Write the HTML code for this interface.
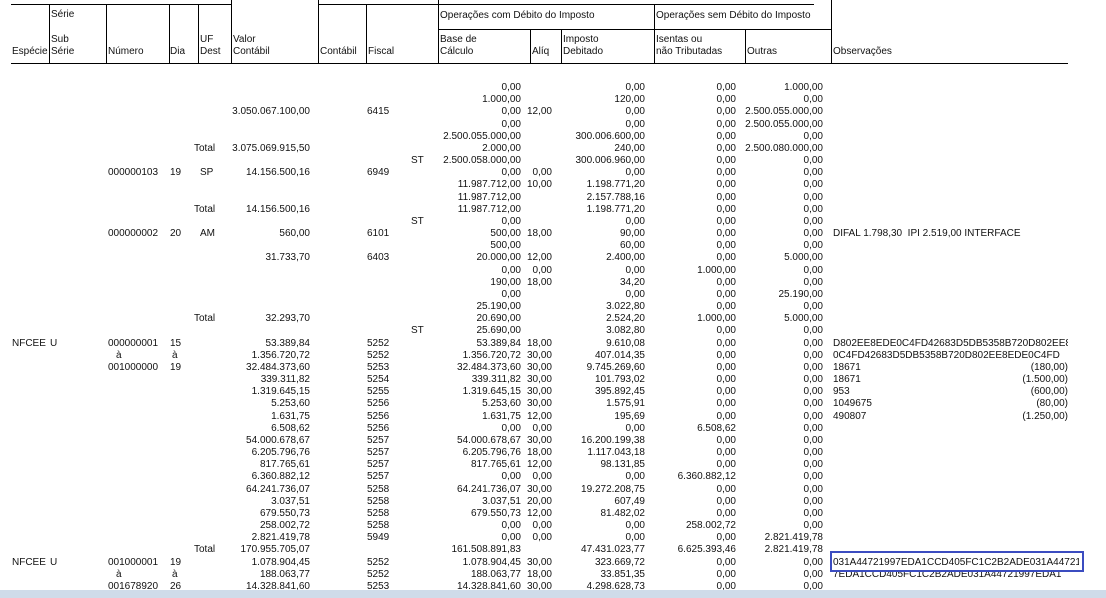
<!DOCTYPE html>
<html><head><meta charset="utf-8"><style>
html,body{margin:0;padding:0;background:#fff}
body{width:1106px;height:598px;position:relative;overflow:hidden;font-family:"Liberation Sans",Arial,sans-serif;font-size:10px;color:#111}
.l{position:absolute;background:#000}
.h{position:absolute;line-height:12px;white-space:nowrap}
.r{position:absolute;left:0;width:1106px;height:12px;line-height:12px}
.r span{position:absolute;white-space:nowrap}
.e{left:12px}.s{left:50px}.n{left:108px}.na{left:116px}.d{left:170px}.da{left:172px}.u{left:200px}.t{left:194px}
.v{right:796px}.c{left:367px}.x{left:411px}.b{right:585px}.q{right:554px}.m{right:461px}.i{right:370px}.o{right:283px}
.p{left:833px;width:235px;overflow:hidden}.z{right:38px}
.band{position:absolute;left:0;top:590px;width:1106px;height:8px;background:#cfdbe9}
.box{position:absolute;left:830px;top:551px;width:250px;height:17px;border:2px solid #3b4cc0}
</style></head><body>
<div class="l" style="left:11px;top:4px;width:220px;height:1px"></div>
<div class="l" style="left:318px;top:4px;width:496px;height:1px"></div>
<div class="l" style="left:49px;top:4px;width:1px;height:59px"></div>
<div class="l" style="left:106px;top:4px;width:1px;height:59px"></div>
<div class="l" style="left:169px;top:4px;width:1px;height:59px"></div>
<div class="l" style="left:198px;top:4px;width:1px;height:59px"></div>
<div class="l" style="left:231px;top:0;width:1px;height:63px"></div>
<div class="l" style="left:318px;top:0;width:1px;height:63px"></div>
<div class="l" style="left:366px;top:4px;width:1px;height:59px"></div>
<div class="l" style="left:438px;top:0;width:1px;height:63px"></div>
<div class="l" style="left:438px;top:29px;width:393px;height:1px"></div>
<div class="l" style="left:530px;top:29px;width:1px;height:34px"></div>
<div class="l" style="left:561px;top:29px;width:1px;height:34px"></div>
<div class="l" style="left:654px;top:4px;width:1px;height:59px"></div>
<div class="l" style="left:745px;top:29px;width:1px;height:34px"></div>
<div class="l" style="left:831px;top:0;width:1px;height:63px"></div>
<div class="l" style="left:11px;top:63px;width:1057px;height:1px"></div>
<div class="h" style="left:51px;top:9px">Série</div>
<div class="h" style="left:51px;top:34px">Sub<br>Série</div>
<div class="h" style="left:12px;top:46px">Espécie</div>
<div class="h" style="left:108px;top:46px">Número</div>
<div class="h" style="left:170px;top:46px">Dia</div>
<div class="h" style="left:200px;top:34px">UF<br>Dest</div>
<div class="h" style="left:233px;top:34px">Valor<br>Contábil</div>
<div class="h" style="left:320px;top:46px">Contábil</div>
<div class="h" style="left:368px;top:46px">Fiscal</div>
<div class="h" style="left:440px;top:10px">Operações com Débito do Imposto</div>
<div class="h" style="left:656px;top:10px">Operações sem Débito do Imposto</div>
<div class="h" style="left:440px;top:34px">Base de<br>Cálculo</div>
<div class="h" style="left:532px;top:46px">Alíq</div>
<div class="h" style="left:563px;top:34px">Imposto<br>Debitado</div>
<div class="h" style="left:656px;top:34px">Isentas ou<br>não Tributadas</div>
<div class="h" style="left:747px;top:46px">Outras</div>
<div class="h" style="left:833px;top:46px">Observações</div>

<div class="r" style="top:82px"><span class="b">0,00</span><span class="m">0,00</span><span class="i">0,00</span><span class="o">1.000,00</span></div>
<div class="r" style="top:94px"><span class="b">1.000,00</span><span class="m">120,00</span><span class="i">0,00</span><span class="o">0,00</span></div>
<div class="r" style="top:106px"><span class="v">3.050.067.100,00</span><span class="c">6415</span><span class="b">0,00</span><span class="q">12,00</span><span class="m">0,00</span><span class="i">0,00</span><span class="o">2.500.055.000,00</span></div>
<div class="r" style="top:119px"><span class="b">0,00</span><span class="m">0,00</span><span class="i">0,00</span><span class="o">2.500.055.000,00</span></div>
<div class="r" style="top:131px"><span class="b">2.500.055.000,00</span><span class="m">300.006.600,00</span><span class="i">0,00</span><span class="o">0,00</span></div>
<div class="r" style="top:143px"><span class="t">Total</span><span class="v">3.075.069.915,50</span><span class="b">2.000,00</span><span class="m">240,00</span><span class="i">0,00</span><span class="o">2.500.080.000,00</span></div>
<div class="r" style="top:155px"><span class="x">ST</span><span class="b">2.500.058.000,00</span><span class="m">300.006.960,00</span><span class="i">0,00</span><span class="o">0,00</span></div>
<div class="r" style="top:167px"><span class="n">000000103</span><span class="d">19</span><span class="u">SP</span><span class="v">14.156.500,16</span><span class="c">6949</span><span class="b">0,00</span><span class="q">0,00</span><span class="m">0,00</span><span class="i">0,00</span><span class="o">0,00</span></div>
<div class="r" style="top:179px"><span class="b">11.987.712,00</span><span class="q">10,00</span><span class="m">1.198.771,20</span><span class="i">0,00</span><span class="o">0,00</span></div>
<div class="r" style="top:192px"><span class="b">11.987.712,00</span><span class="m">2.157.788,16</span><span class="i">0,00</span><span class="o">0,00</span></div>
<div class="r" style="top:204px"><span class="t">Total</span><span class="v">14.156.500,16</span><span class="b">11.987.712,00</span><span class="m">1.198.771,20</span><span class="i">0,00</span><span class="o">0,00</span></div>
<div class="r" style="top:216px"><span class="x">ST</span><span class="b">0,00</span><span class="m">0,00</span><span class="i">0,00</span><span class="o">0,00</span></div>
<div class="r" style="top:228px"><span class="n">000000002</span><span class="d">20</span><span class="u">AM</span><span class="v">560,00</span><span class="c">6101</span><span class="b">500,00</span><span class="q">18,00</span><span class="m">90,00</span><span class="i">0,00</span><span class="o">0,00</span><span class="p">DIFAL 1.798,30 &nbsp;IPI 2.519,00 INTERFACE</span></div>
<div class="r" style="top:240px"><span class="b">500,00</span><span class="m">60,00</span><span class="i">0,00</span><span class="o">0,00</span></div>
<div class="r" style="top:252px"><span class="v">31.733,70</span><span class="c">6403</span><span class="b">20.000,00</span><span class="q">12,00</span><span class="m">2.400,00</span><span class="i">0,00</span><span class="o">5.000,00</span></div>
<div class="r" style="top:265px"><span class="b">0,00</span><span class="q">0,00</span><span class="m">0,00</span><span class="i">1.000,00</span><span class="o">0,00</span></div>
<div class="r" style="top:277px"><span class="b">190,00</span><span class="q">18,00</span><span class="m">34,20</span><span class="i">0,00</span><span class="o">0,00</span></div>
<div class="r" style="top:289px"><span class="b">0,00</span><span class="m">0,00</span><span class="i">0,00</span><span class="o">25.190,00</span></div>
<div class="r" style="top:301px"><span class="b">25.190,00</span><span class="m">3.022,80</span><span class="i">0,00</span><span class="o">0,00</span></div>
<div class="r" style="top:313px"><span class="t">Total</span><span class="v">32.293,70</span><span class="b">20.690,00</span><span class="m">2.524,20</span><span class="i">1.000,00</span><span class="o">5.000,00</span></div>
<div class="r" style="top:325px"><span class="x">ST</span><span class="b">25.690,00</span><span class="m">3.082,80</span><span class="i">0,00</span><span class="o">0,00</span></div>
<div class="r" style="top:338px"><span class="e">NFCEE</span><span class="s">U</span><span class="n">000000001</span><span class="d">15</span><span class="v">53.389,84</span><span class="c">5252</span><span class="b">53.389,84</span><span class="q">18,00</span><span class="m">9.610,08</span><span class="i">0,00</span><span class="o">0,00</span><span class="p">D802EE8EDE0C4FD42683D5DB5358B720D802EE8EDE0C4FD</span></div>
<div class="r" style="top:350px"><span class="na">à</span><span class="da">à</span><span class="v">1.356.720,72</span><span class="c">5252</span><span class="b">1.356.720,72</span><span class="q">30,00</span><span class="m">407.014,35</span><span class="i">0,00</span><span class="o">0,00</span><span class="p">0C4FD42683D5DB5358B720D802EE8EDE0C4FD</span></div>
<div class="r" style="top:362px"><span class="n">001000000</span><span class="d">19</span><span class="v">32.484.373,60</span><span class="c">5253</span><span class="b">32.484.373,60</span><span class="q">30,00</span><span class="m">9.745.269,60</span><span class="i">0,00</span><span class="o">0,00</span><span class="p">18671</span><span class="z">(180,00)</span></div>
<div class="r" style="top:374px"><span class="v">339.311,82</span><span class="c">5254</span><span class="b">339.311,82</span><span class="q">30,00</span><span class="m">101.793,02</span><span class="i">0,00</span><span class="o">0,00</span><span class="p">18671</span><span class="z">(1.500,00)</span></div>
<div class="r" style="top:386px"><span class="v">1.319.645,15</span><span class="c">5255</span><span class="b">1.319.645,15</span><span class="q">30,00</span><span class="m">395.892,45</span><span class="i">0,00</span><span class="o">0,00</span><span class="p">953</span><span class="z">(600,00)</span></div>
<div class="r" style="top:398px"><span class="v">5.253,60</span><span class="c">5256</span><span class="b">5.253,60</span><span class="q">30,00</span><span class="m">1.575,91</span><span class="i">0,00</span><span class="o">0,00</span><span class="p">1049675</span><span class="z">(80,00)</span></div>
<div class="r" style="top:411px"><span class="v">1.631,75</span><span class="c">5256</span><span class="b">1.631,75</span><span class="q">12,00</span><span class="m">195,69</span><span class="i">0,00</span><span class="o">0,00</span><span class="p">490807</span><span class="z">(1.250,00)</span></div>
<div class="r" style="top:423px"><span class="v">6.508,62</span><span class="c">5256</span><span class="b">0,00</span><span class="q">0,00</span><span class="m">0,00</span><span class="i">6.508,62</span><span class="o">0,00</span></div>
<div class="r" style="top:435px"><span class="v">54.000.678,67</span><span class="c">5257</span><span class="b">54.000.678,67</span><span class="q">30,00</span><span class="m">16.200.199,38</span><span class="i">0,00</span><span class="o">0,00</span></div>
<div class="r" style="top:447px"><span class="v">6.205.796,76</span><span class="c">5257</span><span class="b">6.205.796,76</span><span class="q">18,00</span><span class="m">1.117.043,18</span><span class="i">0,00</span><span class="o">0,00</span></div>
<div class="r" style="top:459px"><span class="v">817.765,61</span><span class="c">5257</span><span class="b">817.765,61</span><span class="q">12,00</span><span class="m">98.131,85</span><span class="i">0,00</span><span class="o">0,00</span></div>
<div class="r" style="top:471px"><span class="v">6.360.882,12</span><span class="c">5257</span><span class="b">0,00</span><span class="q">0,00</span><span class="m">0,00</span><span class="i">6.360.882,12</span><span class="o">0,00</span></div>
<div class="r" style="top:484px"><span class="v">64.241.736,07</span><span class="c">5258</span><span class="b">64.241.736,07</span><span class="q">30,00</span><span class="m">19.272.208,75</span><span class="i">0,00</span><span class="o">0,00</span></div>
<div class="r" style="top:496px"><span class="v">3.037,51</span><span class="c">5258</span><span class="b">3.037,51</span><span class="q">20,00</span><span class="m">607,49</span><span class="i">0,00</span><span class="o">0,00</span></div>
<div class="r" style="top:508px"><span class="v">679.550,73</span><span class="c">5258</span><span class="b">679.550,73</span><span class="q">12,00</span><span class="m">81.482,02</span><span class="i">0,00</span><span class="o">0,00</span></div>
<div class="r" style="top:520px"><span class="v">258.002,72</span><span class="c">5258</span><span class="b">0,00</span><span class="q">0,00</span><span class="m">0,00</span><span class="i">258.002,72</span><span class="o">0,00</span></div>
<div class="r" style="top:532px"><span class="v">2.821.419,78</span><span class="c">5949</span><span class="b">0,00</span><span class="q">0,00</span><span class="m">0,00</span><span class="i">0,00</span><span class="o">2.821.419,78</span></div>
<div class="r" style="top:544px"><span class="t">Total</span><span class="v">170.955.705,07</span><span class="b">161.508.891,83</span><span class="m">47.431.023,77</span><span class="i">6.625.393,46</span><span class="o">2.821.419,78</span></div>
<div class="r" style="top:557px"><span class="e">NFCEE</span><span class="s">U</span><span class="n">001000001</span><span class="d">19</span><span class="v">1.078.904,45</span><span class="c">5252</span><span class="b">1.078.904,45</span><span class="q">30,00</span><span class="m">323.669,72</span><span class="i">0,00</span><span class="o">0,00</span><span class="p" style="width:246px">031A44721997EDA1CCD405FC1C2B2ADE031A44721997</span></div>
<div class="r" style="top:569px"><span class="na">à</span><span class="da">à</span><span class="v">188.063,77</span><span class="c">5252</span><span class="b">188.063,77</span><span class="q">18,00</span><span class="m">33.851,35</span><span class="i">0,00</span><span class="o">0,00</span><span class="p">7EDA1CCD405FC1C2B2ADE031A44721997EDA1</span></div>
<div class="r" style="top:581px"><span class="n">001678920</span><span class="d">26</span><span class="v">14.328.841,60</span><span class="c">5253</span><span class="b">14.328.841,60</span><span class="q">30,00</span><span class="m">4.298.628,73</span><span class="i">0,00</span><span class="o">0,00</span></div>
<div class="box"></div>
<div class="band"></div>
</body></html>
